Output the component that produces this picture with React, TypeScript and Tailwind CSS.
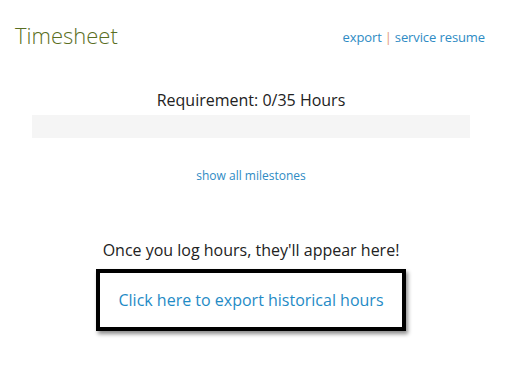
import React from 'react';

export default function App() {
  return (
    <div className="w-[511px] h-[375px] bg-white font-['Open_Sans',sans-serif] overflow-hidden">
      {/* Header */}
      <div className="flex items-start justify-between pl-[15px] pr-[26px] pt-[20px]">
        <h1 className="text-[22px] leading-[30px] font-light text-[#5a6e22]">Timesheet</h1>
        <div className="text-[13px] leading-[18px] mt-[8px] text-[#2e8bc4] tracking-[-0.1px]">
          <a href="#">export</a>
          <span className="text-[#e39a6f] mx-[3px]">|</span>
          <a href="#">service resume</a>
        </div>
      </div>

      {/* Requirement */}
      <div className="ml-[32px] w-[438px] mt-[39px] flex flex-col items-center">
        <div className="text-[16px] leading-[22px] text-[#222]">Requirement: 0/35 Hours</div>
        <div className="w-full h-[23px] bg-[#f5f5f5] mt-[4px]"></div>
        <a href="#" className="text-[12px] leading-[16px] text-[#2e8bc4] mt-[30px]">show all milestones</a>

        <div className="text-[16px] leading-[22px] text-[#222] mt-[55px]">Once you log hours, they'll appear here!</div>
        <div className="mt-[8px] w-[310px] h-[62px] border-[4px] border-black shadow-[2px_3px_4px_rgba(0,0,0,0.45)] flex items-center justify-center">
          <a href="#" className="text-[16px] leading-[22px] text-[#1f8bc6]">Click here to export historical hours</a>
        </div>
      </div>
    </div>
  );
}
